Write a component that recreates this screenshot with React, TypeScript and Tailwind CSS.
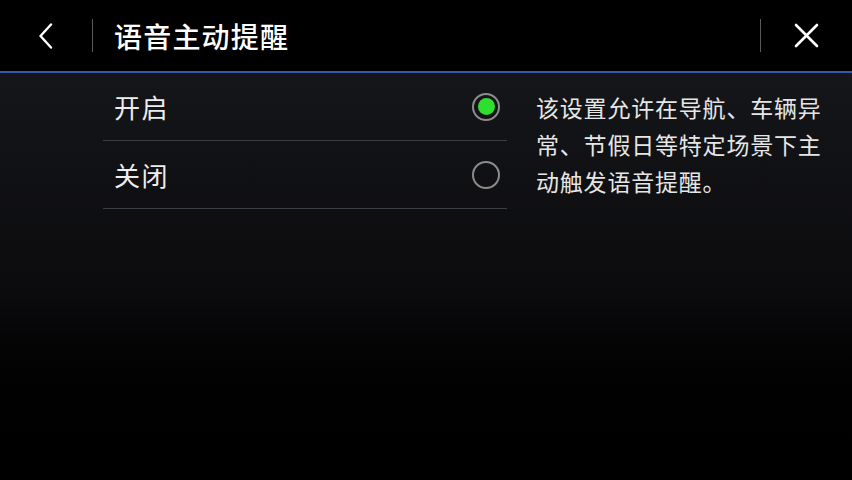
const options = [
  { label: '开启', checked: true },
  { label: '关闭', checked: false },
]

function Radio({ checked }: { checked: boolean }) {
  return (
    <div className="flex h-[28px] w-[28px] items-center justify-center rounded-full border-2 border-[#8c8c8c]">
      {checked && <div className="h-[17px] w-[17px] rounded-full bg-[#2ee02e]" />}
    </div>
  )
}

export default function App() {
  return (
    <div
      className="flex h-[480px] w-[852px] flex-col overflow-hidden bg-black text-[#ededed]"
      style={{ fontFamily: '"Noto Sans CJK SC", "Noto Sans", sans-serif' }}
    >
      <header className="flex h-[71px] shrink-0 items-center bg-black">
        <div className="flex w-[92px] justify-center">
          {/* back chevron */}
          <svg width="16" height="26" viewBox="0 0 16 26" fill="none">
            <path d="M13 1.5 L2.5 13 L13 24.5" stroke="white" strokeWidth="2.4" strokeLinecap="round" strokeLinejoin="round" />
          </svg>
        </div>
        <div className="h-[33px] w-px bg-[#5a5a5a]" />
        <h1 className="ml-[21px] flex-1 text-[28px] font-medium leading-none tracking-[1.2px] text-white">语音主动提醒</h1>
        <div className="h-[33px] w-px bg-[#5a5a5a]" />
        <div className="flex w-[91px] justify-center">
          {/* close */}
          <svg width="25" height="25" viewBox="0 0 25 25" fill="none">
            <path d="M2 2 L23 23 M23 2 L2 23" stroke="white" strokeWidth="2.6" strokeLinecap="round" />
          </svg>
        </div>
      </header>
      <div className="h-[2px] shrink-0 bg-[#3558b0]" />

      <main className="flex flex-1 bg-gradient-to-b from-[#151619] via-[#0b0b0e] via-55% to-black">
        <div className="ml-[103px] w-[404px]">
          {options.map((o) => (
            <div key={o.label} className="flex h-[68px] items-center border-b border-[#3d3e42] pl-[11px] pr-[7px]">
              <span className="flex-1 text-[26px] tracking-[1.5px]">{o.label}</span>
              <Radio checked={o.checked} />
            </div>
          ))}
        </div>
        <div className="ml-[29px] pt-[16px] text-[23px] leading-[37px] tracking-[0.8px] text-[#e6e6e6]">
          <p>该设置允许在导航、车辆异</p>
          <p>常、节假日等特定场景下主</p>
          <p>动触发语音提醒。</p>
        </div>
      </main>
    </div>
  )
}
